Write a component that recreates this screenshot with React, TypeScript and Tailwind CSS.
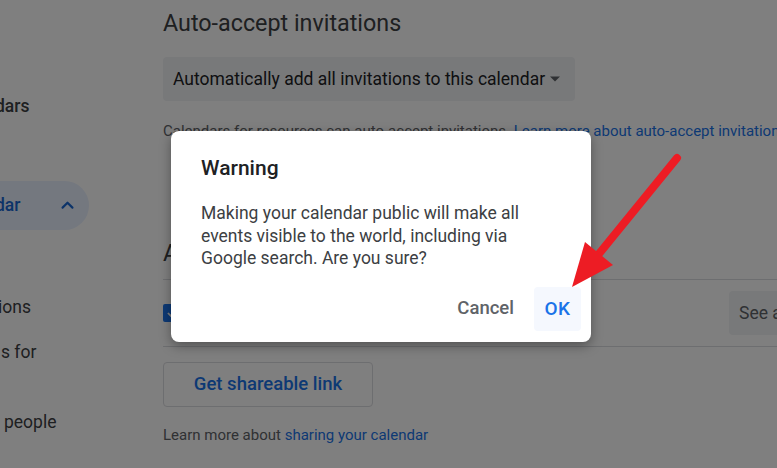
import React from "react";

const roboto = { fontFamily: "Roboto, 'Noto Sans', sans-serif" } as const;

export default function App() {
  return (
    <div
      className="relative w-[777px] h-[468px] overflow-hidden bg-white flex text-[#3c4043]"
      style={roboto}
    >
      {/* Sidebar (cut off at left) */}
      <div className="w-[163px] shrink-0 flex flex-col text-[17.5px] font-medium">
        <div className="mt-[95px] h-[22px] leading-[22px] -ml-[5px]">dars</div>
        <div className="mt-[64px] h-[49px] w-[89px] rounded-r-full bg-[#e8f0fe] flex items-center justify-between pr-[13px] text-[#1967d2]">
          <span className="-ml-[5px]">dar</span>
          <svg width="17" height="17" viewBox="0 0 24 24" fill="none" stroke="#1967d2" strokeWidth="3" strokeLinecap="round" strokeLinejoin="round">
            <path d="M5 15l7-7 7 7" />
          </svg>
        </div>
        <div className="mt-[66px] h-[22px] leading-[22px] font-normal -ml-[2px]">ions</div>
        <div className="mt-[23px] h-[22px] leading-[22px] font-normal ml-[1px]">s for</div>
        <div className="mt-[48px] h-[22px] leading-[22px] font-normal ml-[4px]">people</div>
      </div>

      {/* Main column */}
      <div className="w-[640px] shrink-0 flex flex-col">
        <div className="mt-[9px] h-[28px] leading-[28px] text-[23.3px] text-[#3c4043]">
          Auto-accept invitations
        </div>
        <div className="mt-[20px] h-[44px] w-[412px] rounded-[4px] bg-[#f1f3f4] flex items-center pl-[10px] pr-[15px] justify-between text-[17.5px] text-[#202124]">
          <span>Automatically add all invitations to this calendar</span>
          <svg width="10" height="6" viewBox="0 0 10 5">
            <path d="M0 0l5 5 5-5z" fill="#5f6368" />
          </svg>
        </div>
        <div className="mt-[20px] h-5 leading-5 text-[15px] whitespace-nowrap text-[#5f6368]">
          Calendars for resources can auto-accept invitations.{" "}
          <span className="text-[#1a73e8]">Learn more about auto-accept invitations</span>
        </div>
        <div className="mt-[98px] h-[28px] leading-[28px] text-[23.3px] text-[#3c4043]">
          Access permissions for events
        </div>
        <div className="mt-[12px] border-t border-b border-[#dadce0] h-[68px] flex items-center justify-between">
          <div className="w-[18px] h-[18px] rounded-[2px] bg-[#1a73e8] flex items-center justify-center">
            <svg width="14" height="14" viewBox="0 0 24 24" fill="none" stroke="white" strokeWidth="3">
              <path d="M5 12l5 5 9-10" />
            </svg>
          </div>
          <div className="h-[44px] w-[74px] rounded-[4px] bg-[#f1f3f4] flex items-center pl-[10px] text-[17.5px] text-[#5f6368] whitespace-nowrap">
            See all
          </div>
        </div>
        <div className="mt-[15px] h-[45px] w-[210px] rounded-[4px] border border-[#dadce0] flex items-center justify-center text-[18.5px] font-medium text-[#1a73e8]">
          Get shareable link
        </div>
        <div className="mt-[18px] h-5 leading-5 text-[15px] text-[#5f6368]">
          Learn more about <span className="text-[#1a73e8]">sharing your calendar</span>
        </div>
      </div>

      {/* Scrim */}
      <div className="absolute inset-0 bg-black/50" />

      {/* Dialog */}
      <div className="absolute left-[171px] top-[131px] w-[420px] h-[211px] rounded-[8px] bg-white shadow-[0_4px_12px_rgba(0,0,0,0.35)] flex flex-col">
        <div className="mt-[24px] ml-[30px] h-[26px] leading-[26px] text-[21px] font-medium text-[#202124]">
          Warning
        </div>
        <div className="mt-[21px] ml-[30px] w-[345px] text-[17.5px] leading-[22.5px] text-[#3c4043]">
          Making your calendar public will make all events visible to the world, including via Google search. Are you sure?
        </div>
        <div className="mt-auto mb-[11px] mr-[10px] flex justify-end items-center gap-[8px]">
          <div className="h-[44px] px-[12px] flex items-center text-[18.5px] font-medium text-[#5f6368]">
            Cancel
          </div>
          <div className="h-[44px] w-[47px] rounded-[4px] bg-[#f5f8fe] flex items-center justify-center text-[19px] font-medium tracking-[0.5px] text-[#1a73e8]">
            OK
          </div>
        </div>
      </div>

      {/* Red arrow annotation */}
      <svg className="absolute left-0 top-0" width="777" height="468" viewBox="0 0 777 468">
        <line x1="677" y1="158" x2="598" y2="255" stroke="#ed1c24" strokeWidth="8" strokeLinecap="round" />
        <polygon points="572,287 585,242 613,265" fill="#ed1c24" />
      </svg>
    </div>
  );
}
